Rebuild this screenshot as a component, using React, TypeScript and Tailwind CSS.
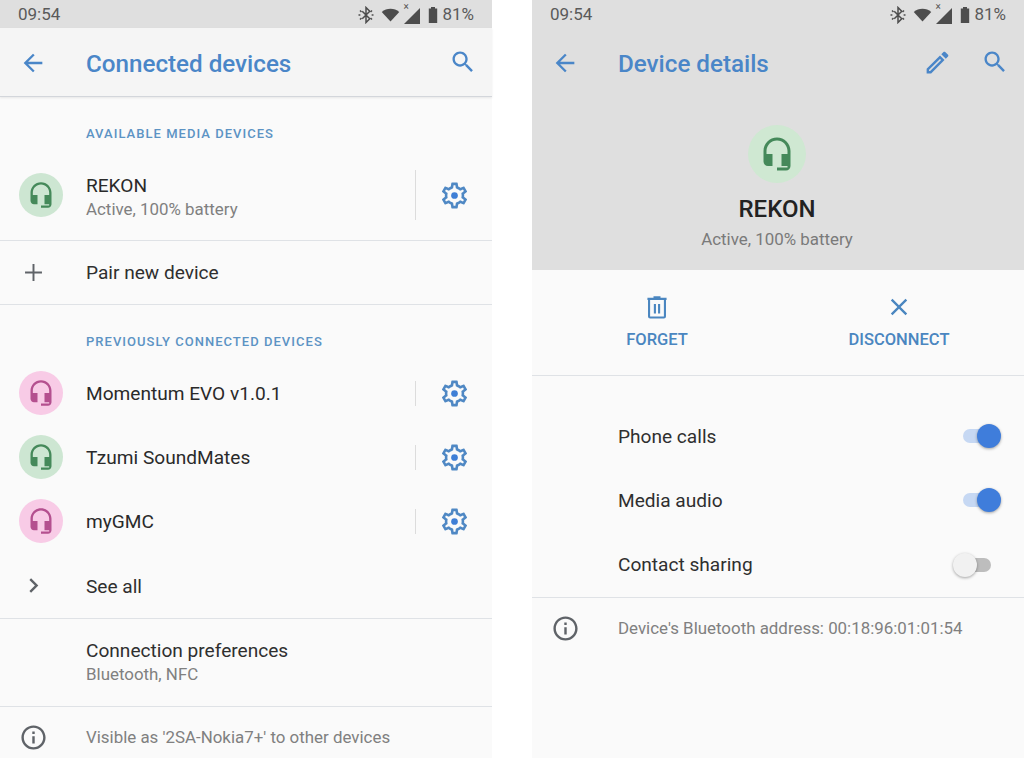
import React from "react";

const P = {
  back: "M20 11H7.83l5.59-5.59L12 4l-8 8 8 8 1.41-1.41L7.83 13H20v-2z",
  search: "M15.5 14h-.79l-.28-.27C15.41 12.59 16 11.11 16 9.5 16 5.91 13.09 3 9.5 3S3 5.91 3 9.5 5.91 16 9.5 16c1.61 0 3.09-.59 4.23-1.57l.27.28v.79l5 4.99L20.49 19l-4.99-5zm-6 0C7.01 14 5 11.99 5 9.5S7.01 5 9.5 5 14 7.01 14 9.5 11.99 14 9.5 14z",
  edit: "M14.06 9.02l.92.92L5.92 19H5v-.92l9.06-9.06M17.66 3c-.25 0-.51.1-.7.29l-1.83 1.83 3.75 3.75 1.83-1.83c.39-.39.39-1.02 0-1.41l-2.34-2.34c-.2-.2-.45-.29-.71-.29zm-3.6 3.19L3 17.25V21h3.75L17.81 9.94l-3.75-3.75z",
  close: "M19 6.41L17.59 5 12 10.59 6.41 5 5 6.41 10.59 12 5 17.59 6.41 19 12 13.41 17.59 19 19 17.59 13.41 12z",
  info: "M11 7h2v2h-2zm0 4h2v6h-2zm1-9C6.48 2 2 6.48 2 12s4.48 10 10 10 10-4.48 10-10S17.52 2 12 2zm0 18c-4.41 0-8-3.59-8-8s3.59-8 8-8 8 3.59 8 8-3.59 8-8 8z",
  plus: "M19 12.8h-6.2V19h-1.6v-6.2H5v-1.6h6.2V5h1.6v6.2H19v1.6z",
  chevron: "M10 6L8.59 7.41 13.17 12l-4.58 4.59L10 18l6-6z",
  headset: "M12 1c-4.97 0-9 4.03-9 9v7c0 1.66 1.34 3 3 3h3v-8H5v-2c0-3.87 3.13-7 7-7s7 3.13 7 7v2h-4v8h4v1h-7v2h6c1.66 0 3-1.34 3-3V10c0-4.97-4.03-9-9-9z",
  gear: "M19.43 12.98c.04-.32.07-.64.07-.98 0-.34-.03-.66-.07-.98l2.11-1.65c.19-.15.24-.42.12-.64l-2-3.46c-.09-.16-.26-.25-.44-.25-.06 0-.12.01-.17.03l-2.49 1c-.52-.4-1.08-.73-1.69-.98l-.38-2.65C14.46 2.18 14.25 2 14 2h-4c-.25 0-.46.18-.49.42l-.38 2.65c-.61.25-1.17.59-1.69.98l-2.49-1c-.06-.02-.12-.03-.18-.03-.17 0-.34.09-.43.25l-2 3.46c-.13.22-.07.49.12.64l2.11 1.65c-.04.32-.07.65-.07.98 0 .33.03.66.07.98l-2.11 1.65c-.19.15-.24.42-.12.64l2 3.46c.09.16.26.25.44.25.06 0 .12-.01.17-.03l2.49-1c.52.4 1.08.73 1.69.98l.38 2.65c.03.24.24.42.49.42h4c.25 0 .46-.18.49-.42l.38-2.65c.61-.25 1.17-.59 1.69-.98l2.49 1c.06.02.12.03.18.03.17 0 .34-.09.43-.25l2-3.46c.12-.22.07-.49-.12-.64l-2.11-1.65zm-1.98-1.71c.04.31.05.52.05.73 0 .21-.02.43-.05.73l-.14 1.13.89.7 1.08.84-.7 1.21-1.27-.51-1.04-.42-.9.68c-.43.32-.84.56-1.25.73l-1.06.43-.16 1.13-.2 1.35h-1.4l-.19-1.35-.16-1.13-1.06-.43c-.43-.18-.83-.41-1.23-.71l-.91-.7-1.06.43-1.27.51-.7-1.21 1.08-.84.89-.7-.14-1.13c-.03-.31-.05-.54-.05-.74s.02-.43.05-.73l.14-1.13-.89-.7-1.08-.84.7-1.21 1.27.51 1.04.42.9-.68c.43-.32.84-.56 1.25-.73l1.06-.43.16-1.13.2-1.35h1.39l.19 1.35.16 1.13 1.06.43c.43.18.83.41 1.23.71l.91.7 1.06-.43 1.27-.51.7 1.21-1.07.85-.89.7.14 1.13z",
};

function Icon({ d, className }: { d: string; className: string }) {
  return (
    <svg viewBox="0 0 24 24" fill="currentColor" className={className}>
      <path d={d} />
    </svg>
  );
}

function Gear() {
  return (
    <svg viewBox="0 0 24 24" fill="currentColor" className="w-[31px] h-[31px] text-[#4f88c4]">
      <path d={P.gear} />
      <circle cx="12" cy="12" r="2.6" fill="#3f7fd6" />
    </svg>
  );
}

function Trash() {
  return (
    <svg viewBox="0 0 24 24" fill="none" stroke="currentColor" strokeWidth="1.8" className="w-[28px] h-[28px] mt-[23px]">
      <path d="M5.2 6v14.1c0 .5.4.9.9.9h11.8c.5 0 .9-.4.9-.9V6" />
      <path d="M3.8 5h16.4M9 3.6h6" />
      <path d="M10.2 9.5v8M13.8 9.5v8" />
    </svg>
  );
}

function StatusBar() {
  return (
    <div className="h-[28px] pt-[2px] flex items-center justify-between pl-[18px] pr-[18px] text-[17px] text-[#5a5a5a]">
      <span>09:54</span>
      <div className="flex items-center">
        <svg viewBox="0 0 24 24" className="w-[18px] h-[18px] mr-[6px]" fill="none" stroke="#4d4d4d" strokeWidth="2">
          <path d="M7 7l10 10-5 5V2l5 5L7 17" />
          <path d="M2 12h2.5M19.5 12h2.5M4 6l2 2M20 6l-2 2M4 18l2-2M20 18l-2-2" strokeWidth="2" />
        </svg>
        <svg viewBox="0 0 20 16" className="w-[19px] h-[14px] mr-[3px]" fill="#4d4d4d">
          <path d="M0 4.5C2.8 2 6.2.8 10 .8s7.2 1.2 10 3.7L10 15.5z" />
        </svg>
        <div className="relative w-[18px] h-[20px] mr-[7px]">
          <span className="absolute left-0 top-[-3px] text-[10px] leading-[10px] text-[#555555]">×</span>
          <svg viewBox="0 0 18 20" className="absolute inset-0 w-[18px] h-[20px]" fill="#4d4d4d">
            <path d="M1 19L17 3v16z" />
          </svg>
        </div>
        <svg viewBox="0 0 10 16" className="w-[10px] h-[16px] mr-[4px]" fill="#4d4d4d">
          <path d="M3 0h4v1.5h2.2V16H.8V1.5H3z" />
        </svg>
        <span>81%</span>
      </div>
    </div>
  );
}

function Toolbar({ title, edit }: { title: string; edit?: boolean }) {
  return (
    <div className="h-[68px] pt-[4px] flex items-center text-[#4a86c8]">
      <div className="w-[86px] pl-[19px] shrink-0 -mt-[2px]">
        <Icon d={P.back} className="w-[28px] h-[28px]" />
      </div>
      <span className="flex-1 text-[24.2px] font-medium">{title}</span>
      {edit && <Icon d={P.edit} className="w-[29px] h-[29px] mr-[29px] -mt-[3px]" />}
      <Icon d={P.search} className="w-[28px] h-[28px] mr-[15px] -mt-[5px]" />
    </div>
  );
}

function Avatar({ pink, large }: { pink?: boolean; large?: boolean }) {
  return (
    <div
      className={`rounded-full flex items-center justify-center shrink-0 ${large ? "w-[58px] h-[58px]" : "w-[44px] h-[44px]"} ${
        pink ? "bg-[#f8cbe6] text-[#b4508f]" : large ? "bg-[#cfe8d2] text-[#45895a]" : "bg-[#cde6d2] text-[#45895a]"
      }`}
    >
      <Icon d={P.headset} className={large ? "w-[36px] h-[36px]" : "w-[28px] h-[28px]"} />
    </div>
  );
}

function SectionLabel({ children, pb }: { children: React.ReactNode; pb: string }) {
  return (
    <div className={`pl-[86px] pt-[28px] text-[13px] leading-[18px] font-medium tracking-[1.03px] text-[#5c93c4] ${pb}`}>
      {children}
    </div>
  );
}

function DeviceRow({ name, sub, pink, h }: { name: string; sub?: string; pink?: boolean; h: string }) {
  return (
    <div className={`flex items-center pl-[19px] pr-[22px] ${h}`}>
      <div className="w-[67px] shrink-0">
        <Avatar pink={pink} />
      </div>
      <div className={`flex-1 min-w-0 ${sub ? "pt-[4px]" : ""}`}>
        <div className="text-[19.1px] leading-[25px] text-[#2a2a2a]">{name}</div>
        {sub && <div className="text-[16.9px] leading-[23px] text-[#808080]">{sub}</div>}
      </div>
      <div className={`w-px bg-[#dcdcdc] mr-[23px] ${sub ? "h-[50px]" : "h-[25px]"}`} />
      <Gear />
    </div>
  );
}

function Line() {
  return <div className="h-px bg-[#dfe2e6]" />;
}

function Toggle({ on }: { on?: boolean }) {
  return on ? (
    <div className="relative w-[38px] h-[24px] mr-[23px] flex items-center">
      <div className="w-[34px] h-[14px] rounded-full bg-[#c6d8f3]" />
      <div className="absolute right-0 top-0 w-[24px] h-[24px] rounded-full bg-[#3f7ddb] shadow-[0_1px_3px_rgba(0,0,0,0.35)]" />
    </div>
  ) : (
    <div className="relative w-[38px] h-[24px] mr-[33px] flex items-center justify-end">
      <div className="w-[32px] h-[14px] rounded-full bg-[#bdbdbd]" />
      <div className="absolute left-0 top-0 w-[24px] h-[24px] rounded-full bg-[#f1f1f1] shadow-[0_1px_3px_rgba(0,0,0,0.35)]" />
    </div>
  );
}

function ToggleRow({ label, on }: { label: string; on?: boolean }) {
  return (
    <div className="h-[64.3px] flex items-center justify-between pl-[86px]">
      <span className="pt-[2px] text-[19.1px] text-[#2f2f2f]">{label}</span>
      <Toggle on={on} />
    </div>
  );
}

function Action({ icon, label }: { icon: React.ReactNode; label: string }) {
  return (
    <div className="flex-1 flex flex-col items-center text-[#4a86c0]">
      {icon}
      <span className="mt-[7px] text-[16.5px] leading-[24px] font-medium">{label}</span>
    </div>
  );
}

export default function App() {
  return (
    <div className="w-[1024px] h-[758px] overflow-hidden bg-white flex justify-between font-['Roboto',sans-serif]">
      <div className="w-[492px] h-full bg-[#fafafa] flex flex-col">
        <div className="bg-[#dfdfdf]">
          <StatusBar />
        </div>
        <div className="bg-[#f5f5f5] border-b border-[#d3d6db] shadow-[0_1px_2px_rgba(0,0,0,0.08)]">
          <Toolbar title="Connected devices" />
        </div>
        <SectionLabel pb="pb-[12px]">AVAILABLE MEDIA DEVICES</SectionLabel>
        <DeviceRow name="REKON" sub="Active, 100% battery" h="h-[85px] pb-[5px]" />
        <Line />
        <div className="h-[63px] flex items-center">
          <div className="w-[86px] pl-[19px] shrink-0">
            <Icon d={P.plus} className="w-[29px] h-[29px] text-[#5f6368]" />
          </div>
          <span className="pt-[2px] text-[19.1px] text-[#2f2f2f]">Pair new device</span>
        </div>
        <Line />
        <SectionLabel pb="pb-[10px]">PREVIOUSLY CONNECTED DEVICES</SectionLabel>
        <DeviceRow name="Momentum EVO v1.0.1" pink h="h-[64px]" />
        <DeviceRow name="Tzumi SoundMates" h="h-[64px]" />
        <DeviceRow name="myGMC" pink h="h-[64px]" />
        <div className="h-[65px] flex items-center">
          <div className="w-[86px] pl-[19px] shrink-0">
            <Icon d={P.chevron} className="w-[29px] h-[29px] text-[#5f6368]" />
          </div>
          <span className="pt-[3px] text-[19.1px] text-[#2f2f2f]">See all</span>
        </div>
        <Line />
        <div className="h-[87px] pb-[2px] flex flex-col justify-center pl-[86px]">
          <div className="text-[19.1px] leading-[25px] text-[#2f2f2f]">Connection preferences</div>
          <div className="text-[16.9px] leading-[23px] text-[#808080]">Bluetooth, NFC</div>
        </div>
        <Line />
        <div className="flex-1 flex items-center pt-[9px]">
          <div className="w-[86px] pl-[19px] shrink-0">
            <Icon d={P.info} className="w-[29px] h-[29px] text-[#5f6368]" />
          </div>
          <span className="pt-[1px] text-[16.9px] text-[#808080]">Visible as '2SA-Nokia7+' to other devices</span>
        </div>
      </div>

      <div className="w-[492px] h-full bg-[#fafafa] flex flex-col">
        <div className="h-[270px] bg-[#dfdfdf] flex flex-col">
          <StatusBar />
          <Toolbar title="Device details" edit />
          <div className="flex flex-col items-center pt-[29px] pr-[2px]">
            <Avatar large />
            <div className="mt-[10px] text-[24px] leading-[32px] font-medium text-[#222222]">REKON</div>
            <div className="mt-[1px] text-[16.9px] leading-[26px] text-[#7a7a7a]">Active, 100% battery</div>
          </div>
        </div>
        <div className="h-[105px] flex px-[4px]">
          <Action icon={<Trash />} label="FORGET" />
          <Action icon={<Icon d={P.close} className="w-[28px] h-[28px] mt-[23px]" />} label="DISCONNECT" />
        </div>
        <Line />
        <div className="pt-[28px]">
          <ToggleRow label="Phone calls" on />
          <ToggleRow label="Media audio" on />
          <ToggleRow label="Contact sharing" />
        </div>
        <Line />
        <div className="h-[62px] flex items-center">
          <div className="w-[86px] pl-[19px] shrink-0">
            <Icon d={P.info} className="w-[29px] h-[29px] text-[#5f6368]" />
          </div>
          <span className="text-[16.9px] text-[#808080]">Device's Bluetooth address: 00:18:96:01:01:54</span>
        </div>
      </div>
    </div>
  );
}
